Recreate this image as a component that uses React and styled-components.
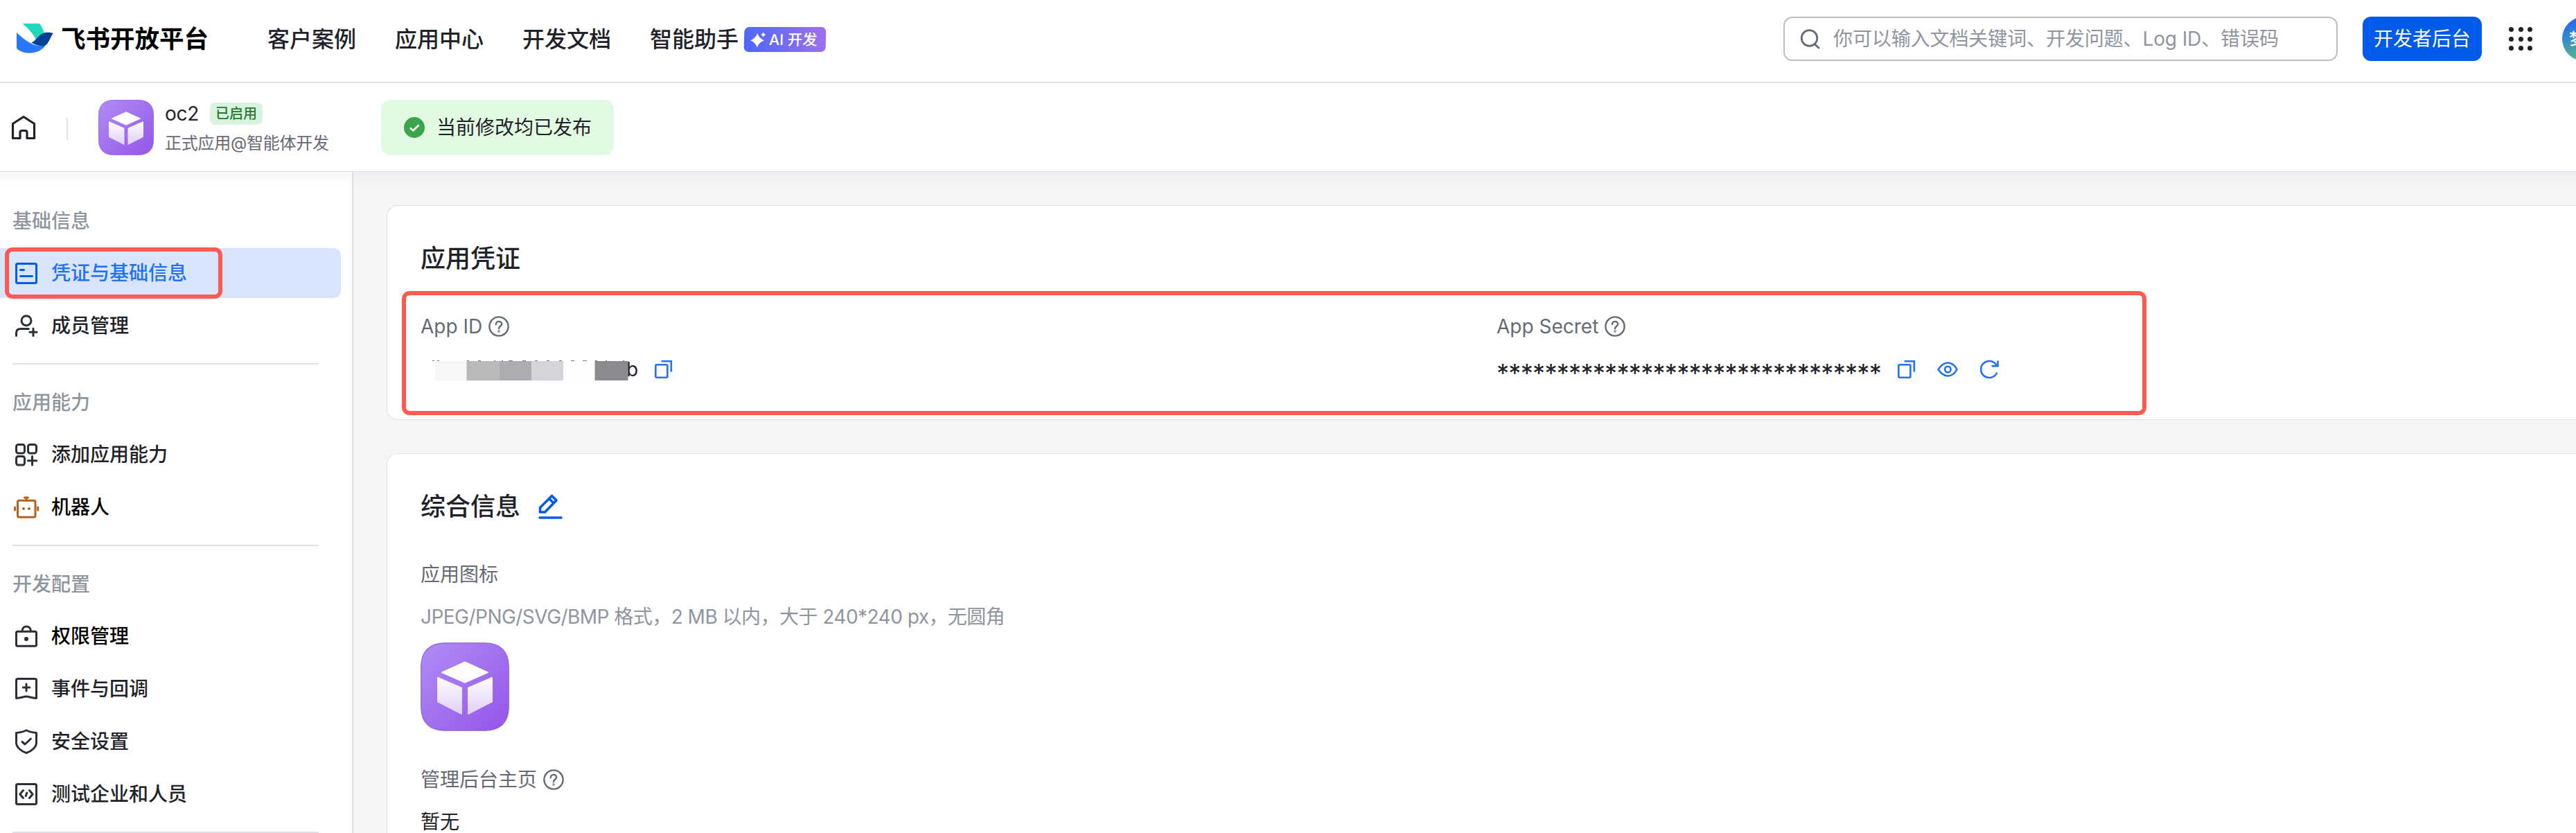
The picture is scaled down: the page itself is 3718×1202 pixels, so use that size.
import React from 'react';
import styled, { createGlobalStyle } from 'styled-components';

const ink = '#1f2329';
const muted = '#646a73';
const faint = '#8f959e';
const line = '#dee0e3';
const primary = '#005bea';
const link = '#2071f5';
const highlight = '#ff5a52';

const GlobalStyle = createGlobalStyle`
  * {
    box-sizing: border-box;
  }

  body {
    margin: 0;
    color: ${ink};
    background: white;
    font-family: Inter, 'Noto Sans CJK SC', sans-serif;
    font-size: 28px;
    line-height: 44px;
    overflow: hidden;
  }
`;

const Page = styled.div`
  height: 1202px;
  display: flex;
  flex-direction: column;
  overflow: hidden;
`;

const Header = styled.header`
  height: 120px;
  flex: none;
  display: flex;
  align-items: center;
  padding: 0 0 6px 24px;
  border-bottom: 2px solid ${line};
`;

const Brand = styled.div`
  width: 362px;
  display: flex;
  align-items: center;
  gap: 10px;
`;

const BrandName = styled.span`
  padding-top: 1px;
  font-size: 35.5px;
  font-weight: 700;
  color: black;
  white-space: nowrap;
`;

const Nav = styled.nav`
  display: flex;
  gap: 56px;
  flex: 1;
  padding-top: 1px;
`;

const NavLink = styled.a`
  display: flex;
  align-items: center;
  gap: 8px;
  font-size: 32px;
  font-weight: 500;
  white-space: nowrap;
`;

const AiBadge = styled.span`
  width: 118px;
  height: 36px;
  display: flex;
  align-items: center;
  gap: 3px;
  padding-left: 9px;
  border-radius: 7px;
  color: white;
  font-size: 21.5px;
  background: linear-gradient(80deg, #4b68fa, #9f70ec);
  transform: skewX(-1.5deg);
`;

const Search = styled.div`
  width: 800px;
  height: 64px;
  display: flex;
  align-items: center;
  gap: 14px;
  padding-left: 20px;
  border: 2px solid #bbbfc4;
  border-radius: 13px;
  color: ${faint};
  letter-spacing: -0.1px;
  white-space: nowrap;

  svg {
    color: ${muted};
  }
`;

const ConsoleButton = styled.button`
  width: 172px;
  height: 64px;
  margin-left: 36px;
  padding: 0;
  border: 0;
  border-radius: 12px;
  background: ${primary};
  color: white;
  font: inherit;
`;

const DotGrid = styled.div`
  display: grid;
  grid-template-columns: repeat(3, 7px);
  gap: 6.5px;
  margin-left: 39px;

  span {
    height: 7px;
    border-radius: 50%;
    background: ${ink};
  }
`;

const Avatar = styled.div`
  width: 64px;
  height: 64px;
  flex: none;
  display: flex;
  align-items: center;
  margin-left: 43px;
  margin-right: -44px;
  padding-left: 10px;
  border-radius: 50%;
  background: linear-gradient(165deg, #2468f2 10%, #5ac47a 95%);
  color: white;
  font-size: 23px;
  font-weight: 500;
`;

const AppBar = styled.div`
  height: 128px;
  flex: none;
  display: flex;
  align-items: center;
  padding-left: 14px;
  border-bottom: 1px solid ${line};
`;

const BarDivider = styled.span`
  width: 2px;
  height: 32px;
  margin: 4px 44px 0 42px;
  background: ${line};
`;

const AppInfo = styled.div`
  width: 312px;
  margin-left: 16px;
`;

const AppName = styled.div`
  display: flex;
  align-items: center;
  gap: 16px;
  height: 40px;
  letter-spacing: -0.3px;
`;

const StatusTag = styled.span`
  height: 32px;
  padding: 0 8px;
  border-radius: 8px;
  background: #d9f3de;
  color: #237b30;
  font-size: 20px;
  font-weight: 500;
  line-height: 32px;
  letter-spacing: 0;
`;

const AppOwner = styled.div`
  height: 40px;
  color: ${muted};
  font-size: 24px;
  line-height: 46px;
  letter-spacing: -0.25px;
  white-space: nowrap;
`;

const Notice = styled.div`
  width: 336px;
  height: 80px;
  display: flex;
  align-items: center;
  gap: 17px;
  padding-left: 33px;
  border-radius: 14px;
  background: #e3fae2;
`;

const Body = styled.div`
  flex: 1;
  min-height: 0;
  display: flex;
  background:
    linear-gradient(rgba(31, 35, 41, 0.035), rgba(31, 35, 41, 0) 20px),
    linear-gradient(90deg, white 508px, #f4f5f7 508px);
`;

const Sidebar = styled.aside`
  width: 510px;
  flex: none;
  padding-top: 48px;
  border-right: 2px solid ${line};
  overflow: hidden;
`;

const Group = styled.section`
  width: 492px;
  margin-bottom: 32px;
`;

const GroupTitle = styled.h4`
  height: 44px;
  margin: 0 0 18px 18px;
  color: ${faint};
  font-size: 28px;
  font-weight: 500;
  line-height: 46px;
`;

const Item = styled.a`
  position: relative;
  height: 72px;
  display: flex;
  align-items: center;
  gap: 16px;
  margin-bottom: 4px;
  padding-left: 18px;
  border-radius: 0 10px 10px 0;
  font-weight: 500;
  color: ${({ $active, $strong }) => ($active ? link : $strong ? 'black' : ink)};
  background: ${({ $active }) => ($active ? '#d9e5fd' : 'transparent')};

  svg {
    color: ${({ $active, $tint }) => ($active ? primary : $tint || '#2b2f36')};
  }
`;

const GroupRule = styled.div`
  width: 442px;
  height: 2px;
  margin: 18px 0 0 18px;
  background: ${line};
`;

// red frame drawn over a part of the page
const Marker = styled.div`
  position: absolute;
  border: 6px solid ${highlight};
  border-radius: 11px;
  pointer-events: none;
`;

const ItemMarker = styled(Marker)`
  left: 7px;
  top: -1px;
  width: 314px;
  height: 74px;
`;

const CredentialMarker = styled(Marker)`
  left: -27px;
  top: -29px;
  width: 2518px;
  height: 179px;
`;

const Content = styled.main`
  flex: 1;
  min-width: 0;
  display: flex;
  flex-direction: column;
  gap: 48px;
  padding: 48px 0 0 48px;
`;

const Card = styled.section`
  height: ${({ $height }) => $height}px;
  flex: none;
  padding: 52px 0 0 48px;
  border: 1px solid ${line};
  border-right: 0;
  border-radius: 16px 0 0 16px;
  background: white;
`;

const CardTitle = styled.h2`
  height: 48px;
  display: flex;
  align-items: center;
  gap: 24px;
  margin: 0 0 52px;
  font-size: 36px;
  font-weight: 500;
  line-height: 48px;

  svg {
    color: ${primary};
  }
`;

const Credentials = styled.div`
  position: relative;
  display: grid;
  grid-template-columns: 1553px 1fr;
`;

const Label = styled.div`
  height: 44px;
  display: flex;
  align-items: center;
  gap: 9px;
  margin-bottom: 17px;
  color: ${muted};

  svg {
    flex: none;
  }
`;

const Value = styled.div`
  height: 44px;
  display: flex;
  align-items: center;
`;

const KeyValue = styled(Value)`
  height: 46px;
`;

const MaskedId = styled.div`
  display: flex;
  align-items: center;
  width: 337px;
  padding-left: 297px;
  position: relative;

  svg {
    position: absolute;
    left: 0;
    top: 8px;
  }
`;

const Stars = styled.span`
  width: 578px;
  padding-top: 10px;
  font-size: 36px;
  letter-spacing: -0.69px;
  white-space: nowrap;
`;

const Actions = styled.div`
  display: flex;
  align-items: center;
  gap: 28px;
  color: ${link};
`;

const Hint = styled.p`
  margin: 0 0 15px;
  color: ${faint};
  font-feature-settings: 'calt' 0;
  letter-spacing: -0.53px;
`;

const IconBlock = styled.div`
  height: 128px;
  margin-bottom: 48px;
`;

const Stroke = ({ size = 40, width = 3, children }) => (
  <svg
    width={size}
    height={size}
    viewBox={`0 0 ${size} ${size}`}
    fill='none'
    stroke='currentColor'
    strokeWidth={width}
    strokeLinecap='round'
    strokeLinejoin='round'
  >
    {children}
  </svg>
);

const Logo = () => (
  <svg width='54' height='44' viewBox='0 0 54 44'>
    <path d='M8.6 0H32Q33.5 0 34.3 1.5Q38 7 40 14L28 23Q21 10 8.6 0Z' fill='#20d8bc' />
    <path
      d='M0 13Q14 26.500 25 30.500Q33 33.500 42 31.500Q34 42 19 42.500Q8 42.500 1 37Q0 36 0 35Z'
      fill='#2878ff'
    />
    <path
      d='M21.500 27.800Q26 25 30 20.500C36 13 43 11 53 14C50 17 47.500 25 43.500 30Q41 33 35 32.300Q28 31.500 21.500 27.800Z'
      fill='#043f98'
    />
  </svg>
);

const AppIcon = ({ size, id }) => (
  <svg width={size} height={size} viewBox='0 0 80 80'>
    <defs>
      <linearGradient id={`${id}-bg`} x1='0' y1='0' x2='1' y2='1'>
        <stop offset='0' stopColor='#b08df6' />
        <stop offset='1' stopColor='#9455e8' />
      </linearGradient>
      <linearGradient
        id={`${id}-face`}
        gradientUnits='userSpaceOnUse'
        x1='0'
        y1='30'
        x2='0'
        y2='66'
      >
        <stop offset='0' stopColor='#fff' />
        <stop offset='1' stopColor='#dfcdf7' />
      </linearGradient>
    </defs>
    <path
      d='M22 0.500H58C72 0.500 79.500 8 79.500 22V58C79.500 72 72 79.500 58 79.500H22C8 79.500 0.500 72 0.500 58V22C0.500 8 8 0.500 22 0.500Z'
      fill={`url(#${id}-bg)`}
      stroke='#8f62d8'
      strokeWidth='0.800'
    />
    <g fill={`url(#${id}-face)`} stroke={`url(#${id}-face)`} strokeLinejoin='round'>
      <path d='M40 17.700L60.700 27L40 36.300L19.300 27Z' />
      <path d='M15.500 31.700L37 41V64.500L15.500 53.500Z' />
      <path d='M64.500 31.700L43 41V64.500L64.500 53.500Z' />
    </g>
  </svg>
);

const Sparkle = () => (
  <svg width='24' height='28' viewBox='0 0 24 28' fill='white'>
    <path d='M10 5Q12.500 12.500 20 15.300Q12.500 18 10 25.500Q7.500 18 0 15.300Q7.500 12.500 10 5Z' />
    <path d='M18.500 3.500Q19.500 6 22 7Q19.500 8 18.500 10.500Q17.500 8 15 7Q17.500 6 18.500 3.500Z' />
  </svg>
);

const HelpIcon = () => (
  <Stroke size={30} width={2.4}>
    <circle cx='15' cy='15' r='13.600' />
    <path d='M10.800 12C10.800 6.500 19.300 6.700 19.200 11.700C19.100 14.500 15 14.600 15 18.200' />
    <circle cx='15' cy='22' r='0.500' />
  </Stroke>
);

const CopyIcon = () => (
  <Stroke size={28} width={2.6}>
    <rect x='2.300' y='7.300' width='17' height='18.500' rx='1.500' />
    <path d='M10.500 2.200H24.800V17.500' strokeLinecap='butt' strokeLinejoin='miter' />
  </Stroke>
);

const EyeIcon = () => (
  <Stroke size={32} width={2.6}>
    <path d='M3.500 16C8.500 8.500 13 6.500 17.500 6.500S26.500 8.500 30.500 16C26.500 23.500 22 25.500 17.500 25.500S8.500 23.500 3.500 16Z' />
    <circle cx='17.300' cy='16' r='4.200' />
  </Stroke>
);

const RefreshIcon = () => (
  <Stroke size={32} width={2.6}>
    <path d='M27.800 21.500A12 12 0 1 1 27 9.200' />
    <path d='M29.500 3.500V11.300H20.500' strokeLinecap='butt' strokeLinejoin='miter' />
  </Stroke>
);

const EditIcon = () => (
  <Stroke size={38} width={3.6}>
    <path d='M4.500 27V20.500L21.500 3.500L28 10L11.500 27ZM17.500 7.500L24 14' />
    <path d='M4 35H35' />
  </Stroke>
);

const Mosaic = () => (
  <svg width='300' height='32' viewBox='0 0 300 32'>
    <path
      d='M17 1.500H20M24 1.500H27M67 1.500H70M83 1.500H87M106 1.500H108M117 1.500H119M127 1.500H133M147 1.500H152M165 1.500H169M182 1.500H186M200 1.500H204M217 1.500H222M234 1.500H240M252 1.500H255M267 1.500H269M292 1.500H294'
      stroke='#777'
      strokeWidth='1'
    />
    <rect x='21' y='2' width='46' height='28' fill='#f7f7f7' />
    <rect x='66.500' y='2' width='48' height='28' fill='#b8b9bb' />
    <rect x='114' y='2' width='46' height='28' fill='#adacb2' />
    <rect x='160' y='2' width='46' height='28' fill='#d5d4da' />
    <rect x='206' y='2' width='45.500' height='28' fill='#fefefe' />
    <rect x='251.500' y='2' width='48' height='28' fill='#8b8a8f' />
  </svg>
);

const groups = [
  {
    title: '基础信息',
    items: [
      {
        label: '凭证与基础信息',
        active: true,
        icon: (
          <>
            <rect x='5.500' y='6.500' width='29' height='28' rx='2' />
            <path d='M11.500 15.500H16.500M11.500 24.500H28.500' />
          </>
        )
      },
      {
        label: '成员管理',
        icon: (
          <>
            <circle cx='20' cy='12.700' r='7' />
            <path d='M5.500 34.500V30.500Q5.500 24.500 11.500 24.500H23.500M30 24V34.500M24.800 29.300H35' />
          </>
        )
      }
    ]
  },
  {
    title: '应用能力',
    items: [
      {
        label: '添加应用能力',
        icon: (
          <>
            <rect x='5.500' y='5.500' width='12' height='12.500' rx='3' />
            <rect x='22.500' y='5.500' width='12' height='12.500' rx='3' />
            <rect x='5.500' y='22.500' width='12' height='12.500' rx='3' />
            <path d='M28.500 22.500V35M22.500 28.700H34.800' />
          </>
        )
      },
      {
        label: '机器人',
        strong: true,
        tint: '#b8611c',
        icon: (
          <>
            <rect x='7.500' y='10.200' width='25.500' height='24' rx='2' />
            <path d='M17.500 6H22.500M20 6V10M3.500 20V24M36.700 20V24' />
            <path d='M16 22H16.010M24 22H24.010' strokeWidth='4' />
          </>
        )
      }
    ]
  },
  {
    title: '开发配置',
    items: [
      {
        label: '权限管理',
        strong: true,
        icon: (
          <>
            <rect x='5.500' y='13.300' width='29' height='21' rx='2' />
            <path d='M14 13C14 3.500 26.500 3.500 26.500 13' />
            <path d='M20 24H20.010' strokeWidth='6' />
          </>
        )
      },
      {
        label: '事件与回调',
        icon: (
          <>
            <path d='M7.500 5.500H32.500Q34.500 5.500 34.500 7.500V33.500C27 33 24 31 20 31S13 33 5.500 33.500V7.500Q5.500 5.500 7.500 5.500Z' />
            <path d='M20 13V23M15.300 18H24.700' />
          </>
        )
      },
      {
        label: '安全设置',
        icon: (
          <>
            <path d='M20 3.800C24 6 29 7 34.500 7.500V22C34.500 28 27 34.500 20 36.500C13 34.500 5.500 28 5.500 22V7.500C11 7 16 6 20 3.800Z' />
            <path d='M14 20.500L18 24L26.500 16' />
          </>
        )
      },
      {
        label: '测试企业和人员',
        icon: (
          <>
            <rect x='5.500' y='5.500' width='29' height='29' rx='2' />
            <path d='M15.500 14.500L10.800 20L15.500 25.500M24.500 14.500L29.200 20L24.500 25.500M20.800 18L19.200 22.500' />
          </>
        )
      }
    ]
  }
];

const navLinks = ['客户案例', '应用中心', '开发文档'];

const TopHeader = () => (
  <Header>
    <Brand>
      <Logo />
      <BrandName>飞书开放平台</BrandName>
    </Brand>
    <Nav>
      {navLinks.map(name => (
        <NavLink key={name}>{name}</NavLink>
      ))}
      <NavLink>
        智能助手
        <AiBadge>
          <Sparkle />
          AI 开发
        </AiBadge>
      </NavLink>
    </Nav>
    <Search>
      <Stroke size={36} width={2.8}>
        <circle cx='15.500' cy='17' r='11.300' />
        <path d='M23.500 26L29 31' />
      </Stroke>
      你可以输入文档关键词、开发问题、Log ID、错误码
    </Search>
    <ConsoleButton>开发者后台</ConsoleButton>
    <DotGrid>
      {[...Array(9)].map((_, i) => (
        <span key={i} />
      ))}
    </DotGrid>
    <Avatar>梦</Avatar>
  </Header>
);

const AppHeader = () => (
  <AppBar>
    <Stroke width={3.2}>
      <path d='M4.500 14.500L20 4.500L35.500 14.500V35.500H25V27Q25 24.500 22.500 24.500H17.500Q15 24.500 15 27V35.500H4.500Z' />
    </Stroke>
    <BarDivider />
    <AppIcon size={80} id='bar' />
    <AppInfo>
      <AppName>
        oc2
        <StatusTag>已启用</StatusTag>
      </AppName>
      <AppOwner>正式应用@智能体开发</AppOwner>
    </AppInfo>
    <Notice>
      <svg width='30' height='30' viewBox='0 0 30 30'>
        <circle cx='15' cy='15' r='15' fill='#3ba54c' />
        <path
          d='M9 15.500L13.300 19.500L21.500 11.500'
          fill='none'
          stroke='white'
          strokeWidth='2.600'
        />
      </svg>
      当前修改均已发布
    </Notice>
  </AppBar>
);

const SideMenu = () => (
  <Sidebar>
    {groups.map(({ title, items }) => (
      <Group key={title}>
        <GroupTitle>{title}</GroupTitle>
        {items.map(({ label, icon, active, strong, tint }) => (
          <Item key={label} $active={active} $strong={strong} $tint={tint}>
            <Stroke>{icon}</Stroke>
            {label}
            {active && <ItemMarker />}
          </Item>
        ))}
        <GroupRule />
      </Group>
    ))}
  </Sidebar>
);

const App = () => (
  <Page>
    <GlobalStyle />
    <TopHeader />
    <AppHeader />
    <Body>
      <SideMenu />
      <Content>
        <Card $height={310}>
          <CardTitle>应用凭证</CardTitle>
          <Credentials>
            <div>
              <Label>
                App ID
                <HelpIcon />
              </Label>
              <KeyValue>
                <MaskedId>
                  b
                  <Mosaic />
                </MaskedId>
                <Actions>
                  <CopyIcon />
                </Actions>
              </KeyValue>
            </div>
            <div>
              <Label>
                App Secret
                <HelpIcon />
              </Label>
              <KeyValue>
                <Stars>********************************</Stars>
                <Actions>
                  <CopyIcon />
                  <EyeIcon />
                  <RefreshIcon />
                </Actions>
              </KeyValue>
            </div>
            <CredentialMarker />
          </Credentials>
        </Card>
        <Card $height={900}>
          <CardTitle>
            综合信息
            <EditIcon />
          </CardTitle>
          <Label>应用图标</Label>
          <Hint>JPEG/PNG/SVG/BMP 格式，2 MB 以内，大于 240*240 px，无圆角</Hint>
          <IconBlock>
            <AppIcon size={128} id='card' />
          </IconBlock>
          <Label>
            管理后台主页
            <HelpIcon />
          </Label>
          <Value>暂无</Value>
        </Card>
      </Content>
    </Body>
  </Page>
);

export default App;
